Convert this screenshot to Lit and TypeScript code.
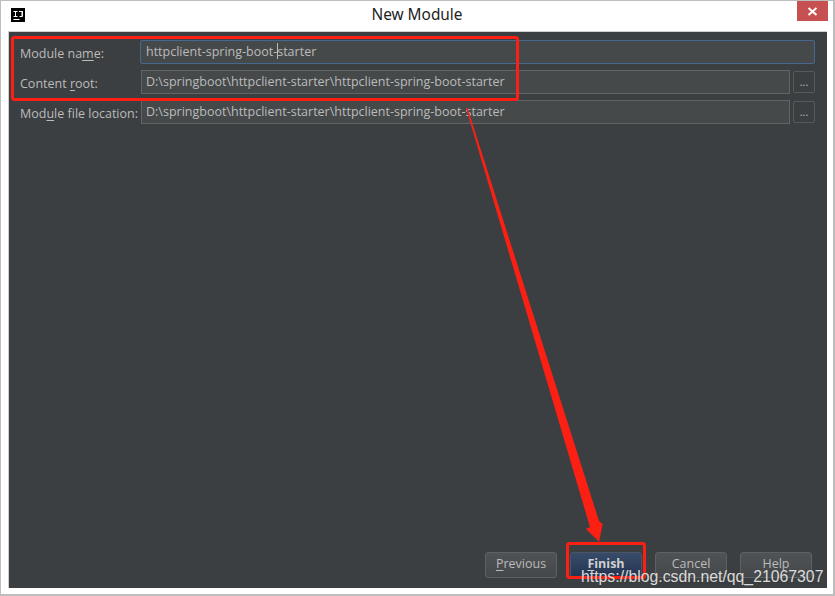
import { LitElement, html, css } from "lit";
import { customElement } from "lit/decorators.js";

@customElement("app-root")
export class AppRoot extends LitElement {
  static styles = css`
    :host { display: block; width: 835px; height: 596px; position: relative; overflow: hidden; font-family: "Open Sans", sans-serif; }
    .window { box-sizing: border-box; width: 835px; height: 596px; background: #fff; border: 1px solid #bdbdbd; border-width: 1px 2px 2px 1px; display: flex; flex-direction: column; padding: 0 6px 6px 7px; }
    .titlebar { height: 30px; flex: none; display: flex; align-items: flex-start; position: relative; justify-content: center; }
    .logo { position: absolute; left: 3px; top: 7px; width: 14px; height: 14px; display: block; }
    .title { font-family: "Noto Sans", sans-serif; font-size: 15.4px; color: #222; line-height: 28px; margin-left: -1px; }
    .close { position: absolute; right: -1px; top: 0; width: 31px; height: 20px; background: #c75050; display: flex; align-items: center; justify-content: center; }
    .panel { flex: 1; background: #3c3f41; border: 1px solid #d0d0d0; border-width: 1px 0 0 1px; padding: 8px 12px 10px 11px; display: flex; flex-direction: column; color: #bbbbbb; font-size: 12.5px; min-height: 0; }
    .form { display: grid; grid-template-columns: 118px 1fr 22px; column-gap: 3px; row-gap: 6px; align-items: center; }
    .label { white-space: nowrap; padding-top: 2px; }
    u { text-underline-offset: 2px; }
    .field { box-sizing: border-box; height: 24px; background: #45494a; border: 1px solid #646464; padding: 0 5px 0 4px; line-height: 21px; color: #bbbbbb; white-space: nowrap; }
    .field.focus { grid-column: 2 / 4; background: #45494a; border: 1.5px solid #46688f; border-radius: 2px; color: #bbb; height: 24px; margin-left: -1px; padding-left: 5px; line-height: 22px; }
    .caret { display: inline-block; width: 1px; height: 16px; background: #bbb; margin: 0 -1px 0 0; vertical-align: -3px; }
    .browse { box-sizing: border-box; height: 22px; border: 1px solid #565a5c; border-radius: 2px; background: #3c3f41; display: flex; align-items: center; justify-content: center; line-height: 1; font-size: 11px; padding-bottom: 2px; }
    .spacer { flex: 1; }
    .buttons { display: flex; justify-content: flex-end; gap: 13px; padding-right: 3px; }
    .btn { box-sizing: border-box; width: 72px; height: 26px; border: 1px solid #5e6163; border-radius: 3px; background: linear-gradient(#505355, #45484a); color: #bbbbbb; display: flex; align-items: center; justify-content: center; line-height: 1; padding-bottom: 2px; }
    .btn.primary { background: linear-gradient(#384c6a, #233451); border-color: #4a5568; color: #d0d0d0; font-weight: 700; }
    .overlay { position: absolute; inset: 0; pointer-events: none; }
    .mark { position: absolute; left: 581px; top: 567px; font-family: "Liberation Sans", sans-serif; font-size: 15.8px; line-height: 20px; color: rgba(255,255,255,0.82); white-space: nowrap; text-shadow: 0 0 1px rgba(60,60,60,.6); }
  `;

  render() {
    const path = "D:\\springboot\\httpclient-starter\\httpclient-spring-boot-starter";
    return html`
      <div class="window">
        <div class="titlebar">
          <svg class="logo" viewBox="0 0 14 14">
            <rect width="14" height="14" fill="#000" />
            <path d="M2.5 3h4v1H5v4h1.5v1h-4V8H4V4H2.5zM8 3h4v5q0 1-1 1H8.500V8H10.500V4H8z" fill="#fff" />
            <rect x="2.500" y="11" width="6" height="1" fill="#fff" />
          </svg>
          <span class="title">New Module</span>
          <div class="close">
            <svg width="11" height="9" viewBox="0 0 11 9"><path d="M1.500 1l8 7M9.500 1l-8 7" stroke="#fff" stroke-width="2" fill="none" /></svg>
          </div>
        </div>
        <div class="panel">
          <div class="form">
            <div class="label">Module na<u>m</u>e:</div>
            <div class="field focus">httpclient-spring-boot-<span class="caret"></span>starter</div>
            <div class="label">Content <u>r</u>oot:</div>
            <div class="field">${path}</div>
            <div class="browse">...</div>
            <div class="label">Mod<u>u</u>le file location:</div>
            <div class="field">${path}</div>
            <div class="browse">...</div>
          </div>
          <div class="spacer"></div>
          <div class="buttons">
            <div class="btn"><span><u>P</u>revious</span></div>
            <div class="btn primary"><span><u>F</u>inish</span></div>
            <div class="btn">Cancel</div>
            <div class="btn">Help</div>
          </div>
        </div>
      </div>
      <svg class="overlay" width="835" height="596" viewBox="0 0 835 596">
        <rect x="12.500" y="37.500" width="505" height="62" rx="2" fill="none" stroke="#fb2013" stroke-width="3" />
        <rect x="567.500" y="543.500" width="77" height="34" rx="2" fill="none" stroke="#fb2013" stroke-width="3" />
        <path d="M466 108 L467.500 108 L599 521 L602.700 524 L599 541.700 L586 529 L590 527 Z" fill="#fb2013" />
      </svg>
      <div class="mark">https://blog.csdn.net/qq_21067307</div>
    `;
  }
}
